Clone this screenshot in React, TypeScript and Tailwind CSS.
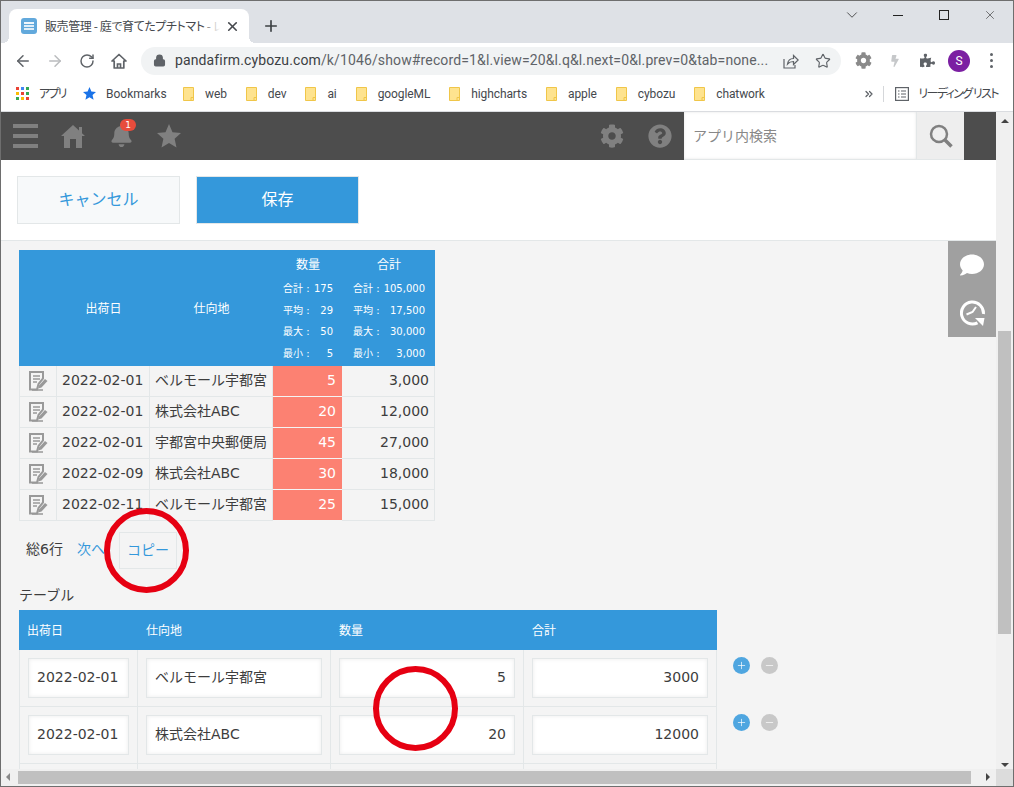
import { ArrowLeft, ArrowRight, RotateCw, Star, X, Plus, Minus, ChevronDown, Lock, ChevronsRight } from 'lucide-react'
import { FaCog, FaPuzzlePiece, FaBolt, FaBell, FaQuestionCircle, FaComment } from 'react-icons/fa'

const BLUE = 'bg-[#3498db]'

const bookmarks = ['web', 'dev', 'ai', 'googleML', 'highcharts', 'apple', 'cybozu', 'chatwork']

const summaryRows = [
  { date: '2022-02-01', dest: 'ベルモール宇都宮', qty: '5', total: '3,000' },
  { date: '2022-02-01', dest: '株式会社ABC', qty: '20', total: '12,000' },
  { date: '2022-02-01', dest: '宇都宮中央郵便局', qty: '45', total: '27,000' },
  { date: '2022-02-09', dest: '株式会社ABC', qty: '30', total: '18,000' },
  { date: '2022-02-11', dest: 'ベルモール宇都宮', qty: '25', total: '15,000' },
]

const editRows = [
  { date: '2022-02-01', dest: 'ベルモール宇都宮', qty: '5', total: '3000' },
  { date: '2022-02-01', dest: '株式会社ABC', qty: '20', total: '12000' },
]

// ---------------------------------------------------------------------------
// Drawn icons
// ---------------------------------------------------------------------------

function FolderIcon() {
  return (
    <svg width="11" height="14" viewBox="0 0 11 14" className="shrink-0">
      <path d="M.5.5h10v13H.5z" fill="#fee38f" stroke="#f0c649" />
      <path d="M8 13.500v-3h2.500" fill="none" stroke="#f0c649" />
    </svg>
  )
}

function AppsIcon() {
  const colors = ['#ea4335', '#4285f4', '#34a853', '#fbbc04', '#ea4335', '#34a853', '#34a853', '#fbbc04', '#ea4335']
  return (
    <div className="grid grid-cols-3 gap-[2px] w-[13px] shrink-0">
      {colors.map((c, i) => (
        <span key={i} className="w-[3px] h-[3px]" style={{ background: c }} />
      ))}
    </div>
  )
}

function Favicon() {
  return (
    <div className="w-[16px] h-[16px] rounded-[3px] bg-[#62a9dc] flex flex-col justify-center items-center gap-[1px] shrink-0">
      <span className="w-[10px] h-[2px] bg-white/90" />
      <span className="w-[10px] h-[2px] bg-white/80" />
      <span className="w-[10px] h-[2px] bg-white/80" />
    </div>
  )
}

function EditIcon() {
  return (
    <svg width="19" height="20" viewBox="0 0 19 20">
      <path d="M1 1h13v6.500L9.500 13 8 18.500H1z" fill="#f4f4f4" stroke="#999" strokeWidth="2" />
      <path d="M4 5h7M4 8h7M4 11h4" stroke="#999" strokeWidth="1.400" />
      <path d="M10 14.500l6-6.500 2.500 2-6 6.500-3.500 1z" fill="#999" />
      <path d="M14 19H3" stroke="#999" strokeWidth="1.500" />
    </svg>
  )
}

function HomeIcon() {
  return (
    <svg width="24" height="24" viewBox="0 0 24 24" fill="#808080">
      <path d="M12 1l6 5.500V3h3v6.300L24 12h-3v12h-6v-9H9v9H3V12H0z" />
    </svg>
  )
}

function SolidStar({ size, color }: { size: number; color: string }) {
  return (
    <svg width={size} height={size} viewBox="0 0 24 24" fill={color} className="shrink-0">
      <path d="M12 0l3.500 8.200 8.500.8-6.400 5.800 1.900 8.700L12 18.900l-7.500 4.600 1.900-8.700L0 9l8.500-.8z" />
    </svg>
  )
}

function SearchIcon() {
  return (
    <svg width="24" height="24" viewBox="0 0 24 24" fill="none" stroke="#808080">
      <circle cx="10" cy="10" r="8" strokeWidth="2.500" />
      <path d="M15.500 15.500l7 7" strokeWidth="3.500" />
    </svg>
  )
}

function HistoryIcon() {
  return (
    <svg width="25" height="26" viewBox="0 0 25 26" fill="none" stroke="#fff">
      <path d="M17.500 22.800A11 11 0 1 1 23.400 14" strokeWidth="3" />
      <path d="M6.500 14.500l6-2.500 3.500-5" strokeWidth="2" />
      <path d="M15 18h9.500l-1.500 8z" fill="#fff" stroke="none" />
    </svg>
  )
}

function ShareIcon() {
  return (
    <svg width="16" height="16" viewBox="0 0 16 16" fill="none" stroke="#5f6368" strokeWidth="1.200">
      <path d="M1 6v9h11v-3" />
      <path d="M4.500 11c.5-3.500 3-5.500 6-5.500V2.500L15.200 7l-4.700 4.500V8.500c-2.500 0-4.500.8-6 2.500z" />
    </svg>
  )
}

function BrowserHomeIcon() {
  return (
    <svg width="16" height="16" viewBox="0 0 16 16" fill="none" stroke="#5f6368" strokeWidth="1.700">
      <path d="M1 8l7-6.500L15 8h-2.200v7H3.200V8z" strokeLinejoin="round" />
      <path d="M6.500 15v-4h3v4" />
    </svg>
  )
}

function ReadingListIcon() {
  return (
    <svg width="14" height="14" viewBox="0 0 14 14" fill="none" stroke="#5f6368" strokeWidth="1.200">
      <rect x=".6" y=".6" width="12.800" height="12.800" />
      <path d="M3 4h1.500M3 7h1.500M3 10h1.500M6 4h5M6 7h5M6 10h5" />
    </svg>
  )
}

function RoundButton({ tone, children }: { tone: string; children: React.ReactNode }) {
  return <span className={`w-[17px] h-[17px] rounded-full flex items-center justify-center ${tone}`}>{children}</span>
}

// ---------------------------------------------------------------------------
// Browser chrome
// ---------------------------------------------------------------------------

function TabStrip() {
  return (
    <div className="h-[42px] shrink-0 bg-[#dee1e6] flex items-start" style={{ fontFamily: '"Noto Sans CJK JP", sans-serif' }}>
      <div className="relative ml-[8px] mt-[8px] w-[240px] h-[34px] bg-white rounded-t-[8px] flex items-center pl-[12px]">
        <Favicon />
        <div className="relative ml-[8px] w-[175px] overflow-hidden whitespace-nowrap text-[12px] tracking-[-0.4px] text-[#45484d] [font-feature-settings:'palt']">
          販売管理 - 庭で育てたプチトマト - レコード
          <span className="absolute right-0 top-0 bottom-0 w-[18px] bg-gradient-to-r from-transparent to-white" />
        </div>
        <X size={15} strokeWidth={2.600} className="ml-[5px] text-[#45484d]" />
        <span className="absolute -right-[6px] bottom-0 w-[6px] h-[6px] bg-[radial-gradient(circle_at_top_right,transparent_6px,white_6px)]" />
        <span className="absolute -left-[6px] bottom-0 w-[6px] h-[6px] bg-[radial-gradient(circle_at_top_left,transparent_6px,white_6px)]" />
      </div>
      <Plus size={18} strokeWidth={2.200} className="ml-[13px] mt-[16px] text-[#3c4043]" />
      <div className="ml-auto flex items-center h-[28px] text-[#222]">
        <div className="w-[46px] flex justify-center">
          <ChevronDown size={18} strokeWidth={1} />
        </div>
        <div className="w-[46px] flex justify-center">
          <span className="w-[10px] h-px bg-[#222]" />
        </div>
        <div className="w-[46px] flex justify-center">
          <span className="w-[10px] h-[10px] border border-[#222]" />
        </div>
        <div className="w-[46px] flex justify-center">
          <X size={14} strokeWidth={1} />
        </div>
      </div>
    </div>
  )
}

function Toolbar() {
  return (
    <div className="h-[35px] shrink-0 bg-white flex items-center pl-[6px]">
      <div className="w-[32px] flex justify-center"><ArrowLeft size={18} strokeWidth={2} className="text-[#5f6368]" /></div>
      <div className="w-[32px] flex justify-center"><ArrowRight size={18} strokeWidth={2} className="text-[#babcbe]" /></div>
      <div className="w-[32px] flex justify-center"><RotateCw size={16} strokeWidth={2.200} className="text-[#5f6368]" /></div>
      <div className="w-[32px] flex justify-center"><BrowserHomeIcon /></div>
      <div className="ml-[6px] w-[700px] h-[28px] rounded-full bg-[#f1f3f4] flex items-center pl-[12px] text-[#5f6368]">
        <Lock size={13} strokeWidth={2.500} fill="#5f6368" />
        <span className="ml-[9px] w-[597px] text-[14px] tracking-[0.13px] whitespace-nowrap" style={{ fontFamily: 'Roboto, sans-serif' }}>
          <span className="text-[#3c4043]">pandafirm.cybozu.com</span>/k/1046/show#record=1&amp;l.view=20&amp;l.q&amp;l.next=0&amp;l.prev=0&amp;tab=none...
        </span>
        <span className="ml-[11px]"><ShareIcon /></span>
        <Star size={16} strokeWidth={1.700} className="ml-[16px]" />
      </div>
      <div className="ml-[6px] w-[32px] flex justify-center"><FaCog size={17} className="text-[#8a8a8a]" /></div>
      <div className="w-[32px] flex justify-center"><FaBolt size={12} className="text-[#c6c8ca]" /></div>
      <div className="w-[32px] flex justify-center"><FaPuzzlePiece size={15} className="text-[#5f6368]" /></div>
      <div className="w-[32px] flex justify-center">
        <span className="w-[22px] h-[22px] rounded-full bg-[#7b1fa2] text-white text-[12px] flex items-center justify-center" style={{ fontFamily: 'Roboto, sans-serif' }}>S</span>
      </div>
      <div className="w-[32px] flex flex-col items-center gap-[3px]">
        <span className="w-[3px] h-[3px] rounded-full bg-[#5f6368]" />
        <span className="w-[3px] h-[3px] rounded-full bg-[#5f6368]" />
        <span className="w-[3px] h-[3px] rounded-full bg-[#5f6368]" />
      </div>
    </div>
  )
}

function BookmarkBar() {
  return (
    <div
      className="h-[34px] shrink-0 bg-white border-b border-[#dadce0] flex items-center pl-[15px] pb-[2px] text-[12px] text-[#45484d] whitespace-nowrap [font-feature-settings:'palt']"
      style={{ fontFamily: 'Roboto, "Noto Sans CJK JP", sans-serif' }}
    >
      <AppsIcon />
      <span className="ml-[10px] w-[27px] tracking-[-1.800px]">アプリ</span>
      <span className="ml-[17px]"><SolidStar size={13} color="#1a73e8" /></span>
      <span className="ml-[10px] w-[58px] mr-[19px]">Bookmarks</span>
      <div className="flex items-center gap-[19px] tracking-[-0.1px]">
        {bookmarks.map((b) => (
          <div key={b} className="flex items-center gap-[11px]">
            <FolderIcon />
            <span>{b}</span>
          </div>
        ))}
      </div>
      <ChevronsRight size={12} strokeWidth={2.500} className="ml-auto text-[#5f6368]" />
      <span className="ml-[8px] w-px h-[16px] bg-[#d5d7da]" />
      <span className="ml-[11px]"><ReadingListIcon /></span>
      <span className="ml-[9px] mr-[15px] text-[#45484d] text-[12px] tracking-[-1.600px]">リーディング リスト</span>
    </div>
  )
}

// ---------------------------------------------------------------------------
// App header and action bar
// ---------------------------------------------------------------------------

function AppHeader() {
  return (
    <header className="h-[48px] shrink-0 bg-[#4d4d4d] flex items-center pl-[12px]">
      <div className="w-[25px] flex flex-col gap-[6px]">
        <span className="h-[4px] bg-[#808080]" />
        <span className="h-[4px] bg-[#808080]" />
        <span className="h-[4px] bg-[#808080]" />
      </div>
      <span className="ml-[23px]"><HomeIcon /></span>
      <div className="relative ml-[25px] w-[23px] h-[24px]">
        <FaBell size={23} className="text-[#808080]" />
        <span className="absolute left-[10px] -top-[5px] w-[16px] h-[12px] rounded-full bg-[#e74c3c] text-white text-[9px] leading-[12px] text-center">1</span>
      </div>
      <span className="ml-[24px]"><SolidStar size={24} color="#808080" /></span>
      <FaCog size={24} className="ml-auto text-[#808080]" />
      <FaQuestionCircle size={24} className="ml-[24px] text-[#808080]" />
      <div className="ml-[12px] w-[232px] h-[48px] bg-white border-b border-[#e3e7e8] shadow-[inset_0_0_3px_rgba(0,0,0,0.1)] flex items-center pl-[9px] pt-[2px] text-[14px] text-[#888]">
        アプリ内検索
      </div>
      <div className="w-[48px] h-[48px] bg-[#eeeeee] border-l border-b border-[#e3e7e8] flex items-center justify-center">
        <SearchIcon />
      </div>
      <div className="w-[32px] shrink-0" />
    </header>
  )
}

function ActionBar() {
  return (
    <div className="h-[81px] shrink-0 bg-white border-b border-[#e3e7e8] flex items-center gap-[16px] pl-[16px] pb-px">
      <button className="w-[163px] h-[48px] bg-[#f7f9fa] border border-[#e3e7e8] text-[16px] text-[#3498db]">キャンセル</button>
      <button className={`w-[163px] h-[48px] ${BLUE} border border-[#e3e7e8] text-[16px] text-white`}>保存</button>
    </div>
  )
}

// ---------------------------------------------------------------------------
// Tables
// ---------------------------------------------------------------------------

function StatBlock({ title, stats, className }: { title: string; stats: [string, string][]; className: string }) {
  return (
    <div className={className}>
      <div className="h-[28px] pt-[2px] flex items-center justify-center text-[12px]">{title}</div>
      {stats.map(([label, value]) => (
        <div key={label} className="h-[21.500px] flex items-center justify-between text-[10px]">
          <span>{label} :</span>
          <span>{value}</span>
        </div>
      ))}
    </div>
  )
}

function SummaryTable() {
  return (
    <div className="w-[416px]">
      <div className={`grid grid-cols-[38px_93px_123px_69px_93px] h-[116px] ${BLUE} text-white`}>
        <div />
        <div className="flex items-center justify-center pt-[2px] text-[12px]">出荷日</div>
        <div className="flex items-center justify-center pt-[2px] text-[12px]">仕向地</div>
        <StatBlock
          title="数量"
          className="pl-[10px] pr-[9px]"
          stats={[['合計', '175'], ['平均', '29'], ['最大', '50'], ['最小', '5']]}
        />
        <StatBlock
          title="合計"
          className="pl-[11px] pr-[10px]"
          stats={[['合計', '105,000'], ['平均', '17,500'], ['最大', '30,000'], ['最小', '3,000']]}
        />
      </div>
      {summaryRows.map((r, i) => (
        <div key={i} className="grid grid-cols-[38px_93px_123px_69px_93px] h-[31px] text-[14px] text-[#3d3d3d]">
          <div className="border-l border-r border-b border-[#e3e7e8] flex items-center justify-center pl-px"><EditIcon /></div>
          <div className="border-r border-b border-[#e3e7e8] flex items-center pl-[5px] pb-[2px] whitespace-nowrap">{r.date}</div>
          <div className="border-r border-b border-[#e3e7e8] flex items-center pl-[5px] pb-[2px] whitespace-nowrap">{r.dest}</div>
          <div className="border-b border-[#f4f4f4] bg-[#fc8172] text-white flex items-center justify-end pr-[6px] pb-[2px]">{r.qty}</div>
          <div className="border-r border-b border-[#e3e7e8] flex items-center justify-end pr-[5px] pb-[2px]">{r.total}</div>
        </div>
      ))}
    </div>
  )
}

function InputBox({ value, right }: { value: string; right?: boolean }) {
  return (
    <div
      className={`h-[40px] w-full bg-white border border-[#e3e7e8] shadow-[inset_0_0_4px_rgba(0,0,0,0.08)] flex items-center pb-[2px] text-[14px] text-[#3d3d3d] whitespace-nowrap ${
        right ? 'justify-end pr-[8px]' : 'pl-[8px]'
      }`}
    >
      {value}
    </div>
  )
}

function EditTable() {
  const cols = 'grid grid-cols-[119px_193px_193px_193px_auto]'
  return (
    <div>
      <div className={`${cols} h-[40px] text-[12px] text-white`}>
        <div className={`${BLUE} flex items-center pl-[8px] pt-[2px]`}>出荷日</div>
        <div className={`${BLUE} flex items-center pl-[8px] pt-[2px]`}>仕向地</div>
        <div className={`${BLUE} flex items-center pl-[8px] pt-[2px]`}>数量</div>
        <div className={`${BLUE} flex items-center pl-[8px] pt-[2px]`}>合計</div>
      </div>
      {editRows.map((r, i) => (
        <div key={i} className={`${cols} h-[57px]`}>
          <div className="border-l border-r border-b border-[#e3e7e8] px-[8px] pt-[8px]"><InputBox value={r.date} /></div>
          <div className="border-r border-b border-[#e3e7e8] px-[8px] pt-[8px]"><InputBox value={r.dest} /></div>
          <div className="border-r border-b border-[#e3e7e8] px-[8px] pt-[8px]"><InputBox value={r.qty} right /></div>
          <div className="border-r border-b border-[#e3e7e8] px-[8px] pt-[8px]"><InputBox value={r.total} right /></div>
          <div className="pl-[16px] pt-[7px] flex items-start gap-[11px]">
            <RoundButton tone="bg-[#4fa6e0]"><Plus size={11} strokeWidth={1.500} className="text-white" /></RoundButton>
            <RoundButton tone="bg-[#c8c8c8]"><Minus size={11} strokeWidth={1.500} className="text-white" /></RoundButton>
          </div>
        </div>
      ))}
      <div className={`${cols} h-[57px]`}>
        <div className="border-l border-r border-[#e3e7e8]" />
        <div className="border-r border-[#e3e7e8]" />
        <div className="border-r border-[#e3e7e8]" />
        <div className="border-r border-[#e3e7e8]" />
      </div>
    </div>
  )
}

// ---------------------------------------------------------------------------
// Main component
// ---------------------------------------------------------------------------

export default function App() {
  return (
    <div
      className="relative w-[1014px] h-[787px] overflow-hidden border border-[#6e6e6e] flex flex-col bg-white"
      style={{ fontFamily: '"DejaVu Sans", "Noto Sans CJK JP", sans-serif' }}
    >
      <TabStrip />
      <Toolbar />
      <BookmarkBar />

      <div className="flex h-[657px] shrink-0">
        <main className="relative w-[995px] flex flex-col overflow-hidden bg-[#f4f4f4]">
          <AppHeader />
          <ActionBar />
          <div className="pl-[18px] pt-[9px]">
            <SummaryTable />
            <div className="mt-[11px] flex items-center text-[14px] text-[#3d3d3d]">
              <span className="ml-[7px] pb-[2px]">総6行</span>
              <span className="ml-[14px] pb-[2px] text-[#3498db]">次へ</span>
              <span className="ml-[14px] w-[58px] h-[37px] border border-[#e3e7e8] text-[#3498db] flex items-center justify-center">コピー</span>
            </div>
            <div className="mt-[16px] h-[25px] text-[14px] text-[#3d3d3d]">テーブル</div>
            <EditTable />
          </div>
          <div className="absolute right-0 top-[129px] w-[48px] bg-[#a0a0a0]">
            <div className="h-[48px] flex items-center justify-center"><FaComment size={24} className="text-white" /></div>
            <div className="h-[48px] flex items-center justify-center"><HistoryIcon /></div>
          </div>
        </main>

        <div className="w-[17px] bg-[#f0f0f0] relative">
          <span className="absolute left-[5px] top-[7px] border-x-[4px] border-x-transparent border-b-[4px] border-b-[#444]" />
          <span className="absolute left-[2px] top-[219px] w-[13px] h-[303px] bg-[#c0c0c0]" />
          <span className="absolute left-[5px] bottom-[2px] border-x-[4px] border-x-transparent border-t-[4px] border-t-[#444]" />
        </div>
      </div>

      <div className="h-[17px] shrink-0 flex bg-[#f0f0f0]">
        <div className="w-[995px] relative">
          <span className="absolute left-[5px] top-[4px] border-y-[4px] border-y-transparent border-r-[4px] border-r-[#888]" />
          <span className="absolute left-[17px] top-[2px] w-[953px] h-[13px] bg-[#c0c0c0]" />
          <span className="absolute right-[6px] top-[4px] border-y-[4px] border-y-transparent border-l-[4px] border-l-[#444]" />
        </div>
        <div className="flex-1 bg-[#dcdcdc]" />
      </div>

      <span className="absolute left-[103px] top-[507px] w-[85px] h-[85px] rounded-full border-[6px] border-[#e60012]" />
      <span className="absolute left-[372px] top-[665px] w-[85px] h-[85px] rounded-full border-[6px] border-[#e60012]" />
    </div>
  )
}
